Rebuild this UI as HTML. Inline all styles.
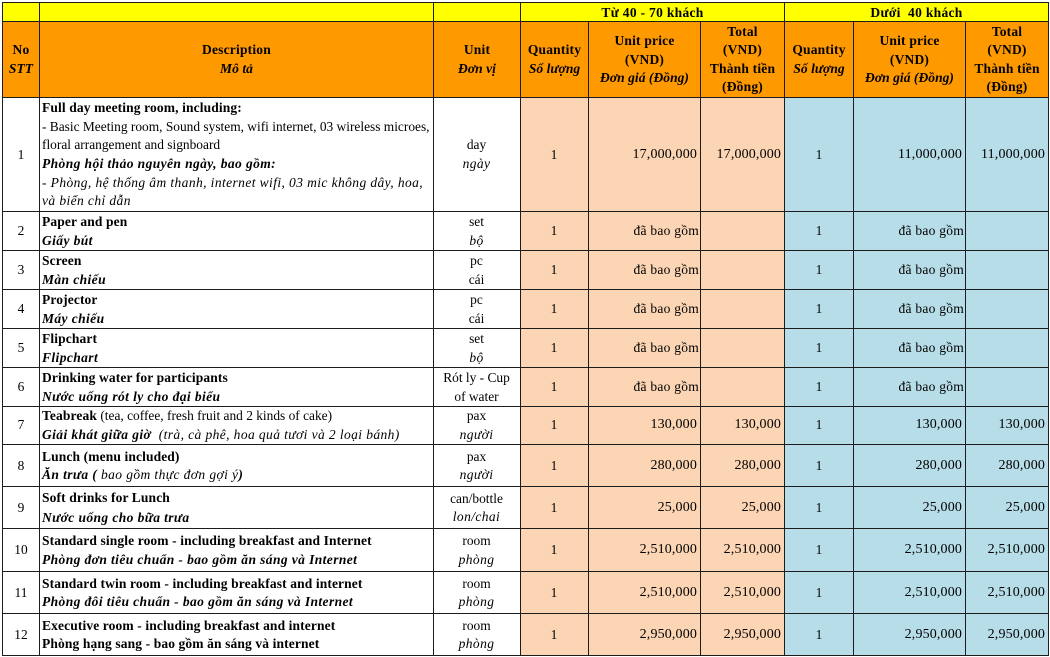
<!DOCTYPE html>
<html><head><meta charset="utf-8">
<style>
html,body{margin:0;padding:0;width:1050px;height:657px;overflow:hidden;background:#fff}
table{position:absolute;left:2px;top:2px;border-collapse:collapse;table-layout:fixed;width:1046px;height:653px;filter:blur(.35px);
font-family:"Liberation Serif","Noto Serif CJK SC",serif;font-size:13.4px;line-height:18.5px;color:#000}
td{border:1px solid #1c1c1c;padding:1px 2px 0;text-align:center;vertical-align:middle;overflow:hidden;white-space:nowrap;background:#fff}
b{font-size:13.5px;letter-spacing:.12px}
i{font-size:13.5px;letter-spacing:.4px}
b i,i b{letter-spacing:.4px;font-weight:bold;font-style:italic}
tr.y td{background:#ff0;font-weight:bold;line-height:17px;font-size:13.5px;letter-spacing:.3px;padding-top:0}
tr.h td{background:#f90;font-weight:bold;font-size:13.5px;letter-spacing:.2px;padding-top:.8px;line-height:18.5px}
tr.h td i{letter-spacing:.05px}
tr.a td{padding-top:.8px;line-height:18.7px}
tr.s td{padding-top:0}
td.z{line-height:20px}
td.d{text-align:left;padding-left:2px}
td.p{background:#fcd5b4}
td.b{background:#b7dee8}
td.n{padding-right:3px}
td.r{text-align:right;padding-right:3px;font-size:14px;letter-spacing:.15px}
td.i{text-align:right;padding-right:1px;font-size:13.5px;letter-spacing:.25px}
</style></head><body>
<table>
<colgroup><col style="width:37px"><col style="width:394px"><col style="width:87px"><col style="width:68px"><col style="width:112px"><col style="width:84px"><col style="width:69px"><col style="width:112px"><col style="width:83px"></colgroup>
<tr class="y" style="height:19px"><td></td><td></td><td></td><td colspan="3">Từ 40 - 70 khách</td><td colspan="3">Dưới&nbsp; 40 khách</td></tr>
<tr class="h" style="height:76px"><td>No<br><i>STT</i></td><td>Description<br><i>Mô tả</i></td><td>Unit<br><i>Đơn vị</i></td><td>Quantity<br><i>Số lượng</i></td><td>Unit price<br>(VND)<br><i>Đơn giá (Đồng)</i></td><td>Total<br>(VND)<br>Thành tiền<br>(Đồng)</td><td>Quantity<br><i>Số lượng</i></td><td>Unit price<br>(VND)<br><i>Đơn giá (Đồng)</i></td><td>Total<br>(VND)<br>Thành tiền<br>(Đồng)</td></tr>
<tr class="a" style="height:114px"><td>1</td><td class="d"><b>Full day meeting room, including:</b><br>- Basic Meeting room, Sound system, wifi internet, 03 wireless microes,<br>floral arrangement and signboard<br><b><i>Phòng hội thảo nguyên ngày, bao gồm:</i></b><br><i>- Phòng, hệ thống âm thanh, internet wifi, 03 mic không dây, hoa,<br>và biển chỉ dẫn</i></td><td class="n">day<br><i>ngày</i></td><td class="p n">1</td><td class="p r">17,000,000</td><td class="p r">17,000,000</td><td class="b">1</td><td class="b r">11,000,000</td><td class="b r">11,000,000</td></tr>
<tr style="height:39px"><td>2</td><td class="d"><b>Paper and pen</b><br><b><i>Giấy bút</i></b></td><td class="n">set<br><i>bộ</i></td><td class="p n">1</td><td class="p i">đã bao gồm</td><td class="p"></td><td class="b">1</td><td class="b i">đã bao gồm</td><td class="b"></td></tr>
<tr style="height:39px"><td>3</td><td class="d"><b>Screen</b><br><b><i>Màn chiếu</i></b></td><td class="n">pc<br>cái</td><td class="p n">1</td><td class="p i">đã bao gồm</td><td class="p"></td><td class="b">1</td><td class="b i">đã bao gồm</td><td class="b"></td></tr>
<tr style="height:39px"><td>4</td><td class="d"><b>Projector</b><br><b><i>Máy chiếu</i></b></td><td class="n">pc<br>cái</td><td class="p n">1</td><td class="p i">đã bao gồm</td><td class="p"></td><td class="b">1</td><td class="b i">đã bao gồm</td><td class="b"></td></tr>
<tr style="height:39px"><td>5</td><td class="d"><b>Flipchart</b><br><b><i>Flipchart</i></b></td><td class="n">set<br><i>bộ</i></td><td class="p n">1</td><td class="p i">đã bao gồm</td><td class="p"></td><td class="b">1</td><td class="b i">đã bao gồm</td><td class="b"></td></tr>
<tr style="height:39px"><td>6</td><td class="d"><b>Drinking water for participants</b><br><b><i>Nước uống rót ly cho đại biểu</i></b></td><td class="n">Rót ly - Cup<br>of water</td><td class="p n">1</td><td class="p i">đã bao gồm</td><td class="p"></td><td class="b">1</td><td class="b i">đã bao gồm</td><td class="b"></td></tr>
<tr class="s" style="height:38px"><td>7</td><td class="d"><b>Teabreak</b> (tea, coffee, fresh fruit and 2 kinds of cake)<br><b><i>Giải khát giữa giờ</i></b><i>&nbsp; (trà, cà phê, hoa quả tươi và 2 loại bánh)</i></td><td class="n">pax<br><i>người</i></td><td class="p n">1</td><td class="p r">130,000</td><td class="p r">130,000</td><td class="b">1</td><td class="b r">130,000</td><td class="b r">130,000</td></tr>
<tr style="height:42px"><td>8</td><td class="d"><b>Lunch (menu included)</b><br><b><i>Ăn trưa (</i></b><i> bao gồm thực đơn gợi ý</i><b><i>)</i></b></td><td class="n">pax<br><i>người</i></td><td class="p n">1</td><td class="p r">280,000</td><td class="p r">280,000</td><td class="b">1</td><td class="b r">280,000</td><td class="b r">280,000</td></tr>
<tr style="height:42px"><td>9</td><td class="d z"><b>Soft drinks for Lunch</b><br><b><i>Nước uống cho bữa trưa</i></b></td><td class="n">can/bottle<br><i>lon/chai</i></td><td class="p n">1</td><td class="p r">25,000</td><td class="p r">25,000</td><td class="b">1</td><td class="b r">25,000</td><td class="b r">25,000</td></tr>
<tr style="height:43px"><td>10</td><td class="d"><b>Standard single room - including breakfast and Internet</b><br><b><i>Phòng đơn tiêu chuẩn - bao gồm ăn sáng và Internet</i></b></td><td class="n">room<br><i>phòng</i></td><td class="p n">1</td><td class="p r">2,510,000</td><td class="p r">2,510,000</td><td class="b">1</td><td class="b r">2,510,000</td><td class="b r">2,510,000</td></tr>
<tr style="height:42px"><td>11</td><td class="d"><b>Standard twin room - including breakfast and internet</b><br><b><i>Phòng đôi tiêu chuẩn - bao gồm ăn sáng và Internet</i></b></td><td class="n">room<br><i>phòng</i></td><td class="p n">1</td><td class="p r">2,510,000</td><td class="p r">2,510,000</td><td class="b">1</td><td class="b r">2,510,000</td><td class="b r">2,510,000</td></tr>
<tr style="height:42px"><td>12</td><td class="d"><b>Executive room - including breakfast and internet</b><br><b>Phòng hạng sang - bao gồm ăn sáng và internet</b></td><td class="n">room<br><i>phòng</i></td><td class="p n">1</td><td class="p r">2,950,000</td><td class="p r">2,950,000</td><td class="b">1</td><td class="b r">2,950,000</td><td class="b r">2,950,000</td></tr>
</table>
</body></html>
